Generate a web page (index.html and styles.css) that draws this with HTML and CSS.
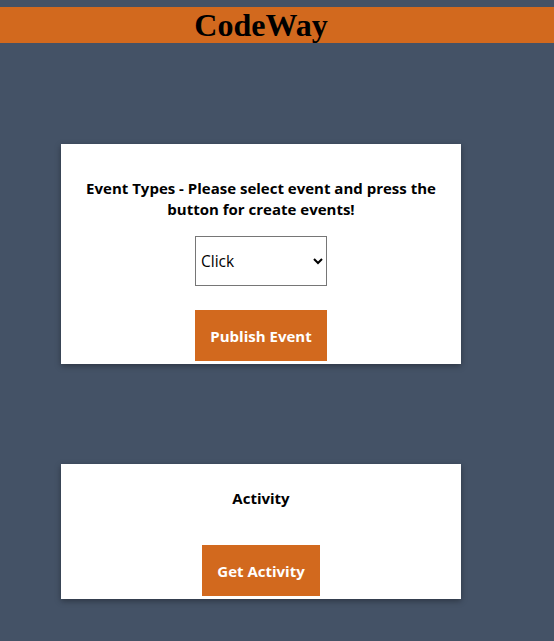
FILE: index.html
```html
<!DOCTYPE html>
<html>
<head>
<meta charset="utf-8">
<link rel="stylesheet" href="styles.css">
</head>
<body>
<header class="topbar">
  <div class="brand">CodeWay</div>
</header>
<main class="main">
  <section class="card card-events">
    <h4 class="card-title">Event Types - Please select event and press the button for create events!</h4>
    <select class="event-select">
      <option>Click</option>
      <option>Scroll</option>
      <option>Hover</option>
    </select>
    <button class="btn btn-publish">Publish Event</button>
  </section>
  <section class="card card-activity">
    <h4 class="card-title activity-title">Activity</h4>
    <button class="btn btn-activity">Get Activity</button>
  </section>
</main>
</body>
</html>
```
FILE: styles.css
```css
html, body {
  margin: 0;
  padding: 0;
}
body {
  background: #445266;
  height: 641px;
  overflow: hidden;
  padding-top: 7px;
  box-sizing: border-box;
  font-family: "Open Sans", "Noto Sans", sans-serif;
}
.topbar {
  background: #d2691e;
  height: 36px;
}
.brand {
  width: 522px;
  text-align: center;
  font-family: "Liberation Serif", serif;
  font-weight: bold;
  font-size: 32px;
  line-height: 36px;
  color: #000;
}
.main {
  width: 522px;
  display: flex;
  flex-direction: column;
  align-items: center;
  padding-top: 101px;
  gap: 100px;
}
.card {
  width: 400px;
  background: #fff;
  box-shadow: 0 2px 6px rgba(0, 0, 0, 0.35);
  display: flex;
  flex-direction: column;
  align-items: center;
  box-sizing: border-box;
}
.card-events {
  height: 220px;
  padding-top: 34px;
}
.card-activity {
  height: 135px;
  padding-top: 24px;
}
.card-title {
  margin: 0;
  font-size: 15px;
  line-height: 21px;
  font-weight: bold;
  text-align: center;
  color: #000;
  padding: 0 20px;
}
.event-select {
  margin-top: 16px;
  width: 132px;
  height: 50px;
  border: 1px solid #767676;
  border-radius: 0;
  background: #fff;
  font-family: "Open Sans", "Noto Sans", sans-serif;
  font-size: 15.5px;
  padding: 0 1px;
  color: #000;
}
.btn {
  background: #d2691e;
  color: #fff;
  border: none;
  height: 51px;
  font-family: "Open Sans", "Noto Sans", sans-serif;
  font-weight: bold;
  font-size: 15px;
  padding: 0;
}
.btn-publish {
  margin-top: 24px;
  width: 132px;
}
.btn-activity {
  margin-top: 36px;
  width: 118px;
}
```
